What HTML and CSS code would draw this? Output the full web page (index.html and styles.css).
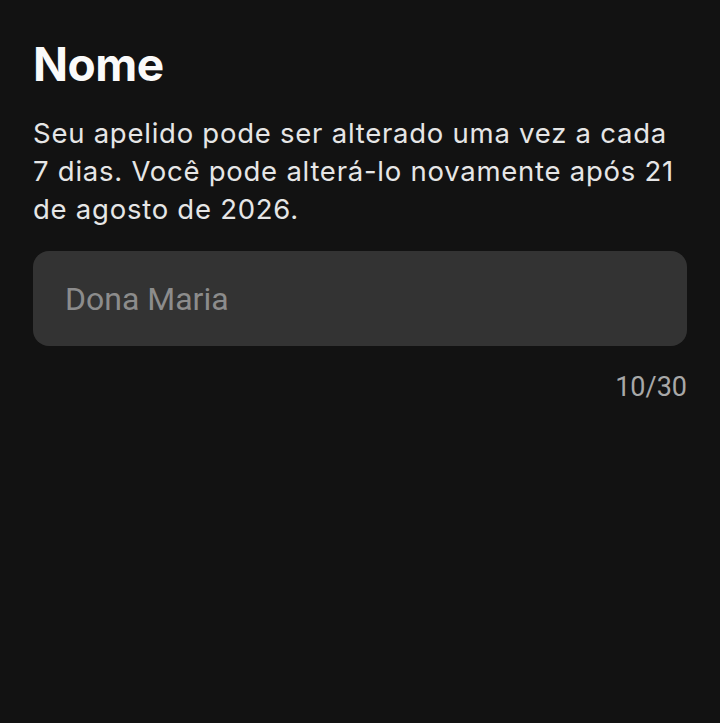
FILE: index.html
```html
<!DOCTYPE html>
<html lang="pt">
<head>
    <meta charset="UTF-8">
    <meta name="viewport" content="width=device-width, initial-scale=1.0">
    <title>Nome</title>
    <link rel="stylesheet" href="styles.css">
</head>
<body>
    <div class="page">
        <h1 class="title">Nome</h1>
        <p class="hint">Seu apelido pode ser alterado uma vez a cada 7 dias. Você pode alterá-lo novamente após 21 de agosto de 2026.</p>
        <div class="field">
            <input class="name-input" type="text" placeholder="Dona Maria">
        </div>
        <div class="counter">10/30</div>
    </div>
</body>
</html>
```

FILE: styles.css
```css
* {margin: 0; padding: 0; box-sizing: border-box;}
html, body {
    height: 100%;
    background-color: #121212;
}
.page {
    padding: 36px 33px 0 33px;
    font-family: Inter, "Noto Sans", sans-serif;
}
.title {
    font-size: 46px;
    font-weight: 700;
    line-height: 56px;
    color: #fafafa;
    letter-spacing: -0.5px;
}
.hint {
    margin-top: 22px;
    font-size: 27.5px;
    line-height: 38px;
    letter-spacing: 0.75px;
    color: #e6e6e6;
}
.field {
    margin-top: 23px;
    height: 95px;
    border-radius: 16px;
    background-color: #333333;
    display: flex;
    align-items: center;
    padding: 0 32px;
}
.name-input {
    width: 100%;
    border: none;
    outline: none;
    background: transparent;
    font-family: Roboto, sans-serif;
    font-size: 32px;
    color: #eeeeee;
}
.name-input::placeholder {
    color: #8c8c8c;
}
.counter {
    margin-top: 25px;
    text-align: right;
    font-family: Roboto, sans-serif;
    font-size: 27px;
    color: #a8a8a8;
}
```
